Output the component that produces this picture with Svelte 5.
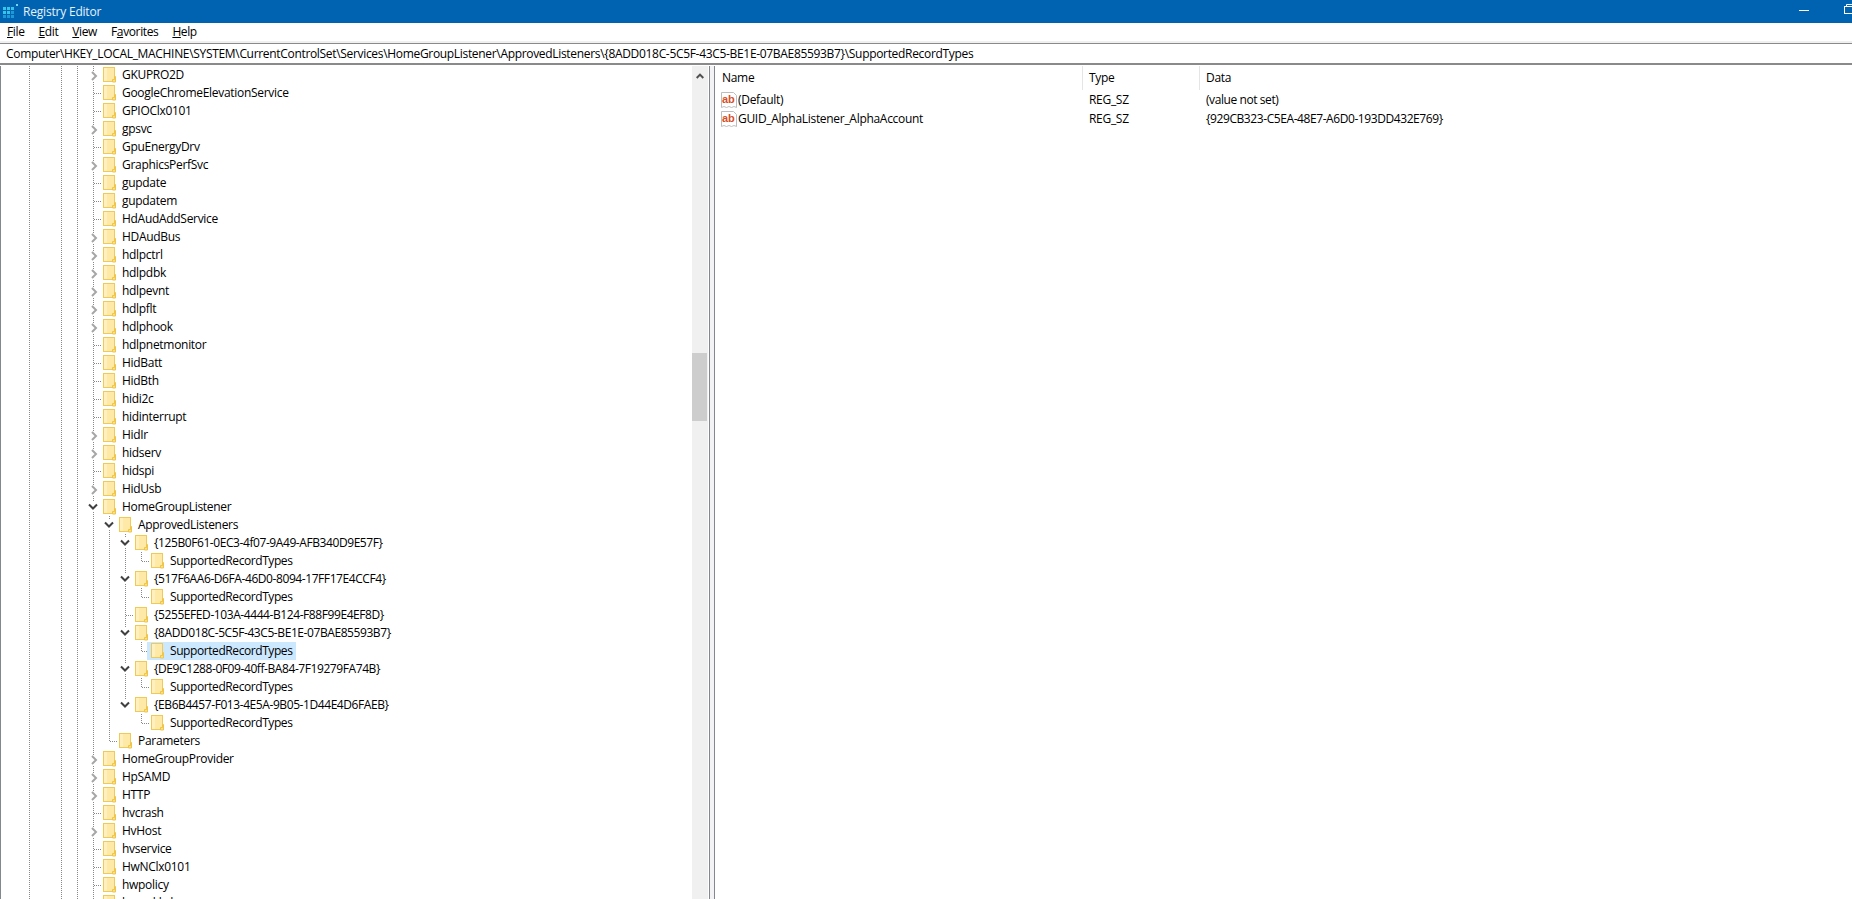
<script>
  const top = 'l-ll';
  const d1 = 'l-lll';
  const d2 = 'l-llll';
  const d3 = 'l-lllll';
  const d3last = 'l-llll-';

  // name, connector kind, indent guides
  const rows = [
    ['GKUPRO2D', 'closed', top],
    ['GoogleChromeElevationService', 'tee', top],
    ['GPIOClx0101', 'tee', top],
    ['gpsvc', 'closed', top],
    ['GpuEnergyDrv', 'tee', top],
    ['GraphicsPerfSvc', 'closed', top],
    ['gupdate', 'tee', top],
    ['gupdatem', 'tee', top],
    ['HdAudAddService', 'tee', top],
    ['HDAudBus', 'closed', top],
    ['hdlpctrl', 'closed', top],
    ['hdlpdbk', 'closed', top],
    ['hdlpevnt', 'closed', top],
    ['hdlpflt', 'closed', top],
    ['hdlphook', 'closed', top],
    ['hdlpnetmonitor', 'tee', top],
    ['HidBatt', 'tee', top],
    ['HidBth', 'tee', top],
    ['hidi2c', 'tee', top],
    ['hidinterrupt', 'tee', top],
    ['HidIr', 'closed', top],
    ['hidserv', 'closed', top],
    ['hidspi', 'tee', top],
    ['HidUsb', 'closed', top],
    ['HomeGroupListener', 'open', top],
    ['ApprovedListeners', 'open', d1],
    ['{125B0F61-0EC3-4f07-9A49-AFB340D9E57F}', 'open', d2],
    ['SupportedRecordTypes', 'corner', d3],
    ['{517F6AA6-D6FA-46D0-8094-17FF17E4CCF4}', 'open', d2],
    ['SupportedRecordTypes', 'corner', d3],
    ['{5255EFED-103A-4444-B124-F88F99E4EF8D}', 'tee', d2],
    ['{8ADD018C-5C5F-43C5-BE1E-07BAE85593B7}', 'open', d2],
    ['SupportedRecordTypes', 'corner', d3, true],
    ['{DE9C1288-0F09-40ff-BA84-7F19279FA74B}', 'open', d2],
    ['SupportedRecordTypes', 'corner', d3],
    ['{EB6B4457-F013-4E5A-9B05-1D44E4D6FAEB}', 'open last', d2],
    ['SupportedRecordTypes', 'corner', d3last],
    ['Parameters', 'corner', d1],
    ['HomeGroupProvider', 'closed', top],
    ['HpSAMD', 'closed', top],
    ['HTTP', 'closed', top],
    ['hvcrash', 'tee', top],
    ['HvHost', 'closed', top],
    ['hvservice', 'tee', top],
    ['HwNClx0101', 'tee', top],
    ['hwpolicy', 'tee', top],
    ['hyperkbd', 'tee', top],
  ];

  const values = [
    ['(Default)', 'REG_SZ', '(value not set)'],
    ['GUID_AlphaListener_AlphaAccount', 'REG_SZ', '{929CB323-C5EA-48E7-A6D0-193DD432E769}'],
  ];

  const path = 'Computer\\HKEY_LOCAL_MACHINE\\SYSTEM\\CurrentControlSet\\Services\\HomeGroupListener\\ApprovedListeners\\{8ADD018C-5C5F-43C5-BE1E-07BAE85593B7}\\SupportedRecordTypes';
</script>

<div class="window">
  <header class="titlebar">
    <svg class="app-icon" width="17" height="17" viewBox="0 0 17 17" aria-hidden="true">
      <g fill="#35c4ea">
        <rect x="1" y="4" width="3" height="3" />
        <rect x="5" y="4" width="3" height="3" />
        <rect x="9" y="4" width="3" height="3" />
        <rect x="1" y="8" width="3" height="3" />
        <rect x="5" y="8" width="3" height="3" />
      </g>
      <g fill="#1b9ad6">
        <rect x="9" y="8" width="3" height="3" />
        <rect x="1" y="12" width="3" height="3" />
        <rect x="5" y="12" width="3" height="3" />
        <rect x="9" y="12" width="3" height="3" />
      </g>
      <rect x="14" y="1" width="2" height="2" fill="#6fd8f2" />
    </svg>
    <span class="title">Registry Editor</span>
    <svg class="min" width="10" height="1" aria-hidden="true"><rect width="10" height="1" fill="#fff" /></svg>
    <svg class="restore" width="11" height="11" viewBox="0 0 11 11" aria-hidden="true">
      <path d="M2.5 2.5V.5h8v7h-2" fill="none" stroke="#fff" />
      <rect x=".5" y="2.5" width="8" height="7" fill="none" stroke="#fff" />
    </svg>
  </header>

  <nav class="menubar">
    <span><u>F</u>ile</span>
    <span><u>E</u>dit</span>
    <span><u>V</u>iew</span>
    <span>F<u>a</u>vorites</span>
    <span><u>H</u>elp</span>
  </nav>

  <div class="address">{path}</div>

  <main class="panes">
    <div class="tree">
      {#each rows as [name, kind, guides, selected]}
        <div class="row">
          {#each guides as g}
            <span class="cell" class:line={g === 'l'}></span>
          {/each}
          <span class="cell {kind}">
            {#if kind.startsWith('closed')}
              <svg width="10" height="10" viewBox="0 0 10 10" aria-hidden="true"><path d="M3 1l4 4-4 4" fill="none" stroke="#a6a6a6" stroke-width="2" /></svg>
            {:else if kind.startsWith('open')}
              <svg width="10" height="8" viewBox="0 0 10 8" aria-hidden="true"><path d="M1 1.5l4 4 4-4" fill="none" stroke="#404040" stroke-width="2" /></svg>
            {/if}
          </span>
          <span class="item" class:selected>
            <svg class="folder" width="14" height="16" viewBox="0 0 14 16" aria-hidden="true">
              <rect x=".5" y=".5" width="11" height="14" fill="#fee9a6" stroke="#f0ca55" />
              <rect x="1" y="1" width="3" height="13" fill="#fff0bf" />
              <path d="M11.5 9.500h1v5.500h-3v-2.500h2z" fill="#fde08a" stroke="#eec44a" />
            </svg>
            <span class="label" class:tight={guides.length > 5}>{name}</span>
          </span>
        </div>
      {/each}
    </div>

    <div class="scrollbar">
      <div class="arrow">
        <svg width="8" height="6" viewBox="0 0 8 6" aria-hidden="true"><path d="M.7 5L4 1.6 7.3 5" fill="none" stroke="#505050" stroke-width="2" /></svg>
      </div>
      <div class="thumb"></div>
    </div>

    <div class="splitter"></div>

    <div class="list">
      <div class="grid head">
        <span>Name</span>
        <span>Type</span>
        <span>Data</span>
      </div>
      {#each values as [name, type, data]}
        <div class="grid value">
          <span class="name">
            <svg width="16" height="16" viewBox="0 0 16 16" aria-hidden="true">
              <path d="M.5.5h12l3 3v12l-2.500-1-2.500 1-2.500-1-2.500 1-2.500-1-2.500 1z" fill="#fff" stroke="#bdbdbd" />
              <text x="1" y="11" class="ab">ab</text>
            </svg>
            {name}
          </span>
          <span>{type}</span>
          <span class="data">{data}</span>
        </div>
      {/each}
    </div>
  </main>
</div>

<style>
  :global(body) {
    margin: 0;
    background: #fff;
  }
  .window {
    height: 100vh;
    display: flex;
    flex-direction: column;
    overflow: hidden;
    font: 12px/18px "Open Sans", "Noto Sans", sans-serif;
    letter-spacing: -0.3px;
    color: #000;
  }
  .titlebar {
    height: 23px;
    flex-shrink: 0;
    display: flex;
    align-items: center;
    background: #0063b1;
    color: #e8f2fa;
    padding-left: 2px;
    letter-spacing: -0.2px;
  }
  .app-icon { flex-shrink: 0; }
  .title { margin-left: 4px; }
  .min { margin-left: auto; margin-bottom: 3px; flex-shrink: 0; }
  .restore { margin-left: 35px; margin-right: -3px; margin-bottom: 4px; flex-shrink: 0; }

  .menubar {
    height: 18px;
    flex-shrink: 0;
    display: flex;
    gap: 14px;
    padding-left: 7px;
    border-bottom: 2px solid #f0f0f0;
    letter-spacing: -0.38px;
  }
  .menubar u { text-underline-offset: 1px; }

  .address {
    height: 19px;
    flex-shrink: 0;
    padding-left: 6px;
    line-height: 20px;
    white-space: nowrap;
    letter-spacing: -0.32px;
    border-top: 1px solid #8a8a8a;
    border-bottom: 2px solid #8a8a8a;
  }

  .panes {
    flex: 1;
    min-height: 0;
    display: flex;
    padding-top: 1px;
  }
  .tree {
    width: 691px;
    flex-shrink: 0;
    border-left: 1px solid #828790;
    padding-left: 20px;
    box-sizing: content-box;
    margin-right: -20px;
    overflow: hidden;
  }
  .row {
    height: 18px;
    display: flex;
    white-space: nowrap;
  }
  .cell {
    width: 16px;
    height: 18px;
    flex-shrink: 0;
    display: flex;
    align-items: center;
    justify-content: center;
    --dots-v: repeating-linear-gradient(to bottom, #888 0 1px, transparent 1px 2px);
    --dots-h: repeating-linear-gradient(to right, #888 0 1px, transparent 1px 2px);
  }
  .line, .closed, .open {
    background: var(--dots-v) 8px 0 / 1px 18px no-repeat;
  }
  .open.last {
    background-size: 1px 4px;
  }
  .tee {
    background:
      var(--dots-h) 9px 9px / 7px 1px no-repeat,
      var(--dots-v) 8px 0 / 1px 18px no-repeat;
  }
  .corner {
    background:
      var(--dots-h) 9px 9px / 7px 1px no-repeat,
      var(--dots-v) 8px 0 / 1px 10px no-repeat;
  }
  .closed svg { background: #fff; margin-top: 2px; margin-left: 1px; }
  .open svg { background: #fff; margin-top: -1px; padding: 1px 0; }

  .item {
    display: flex;
    margin-left: -2px;
    padding: 0 4px;
  }
  .item.selected { background: #cce8ff; }
  .folder { flex-shrink: 0; margin-top: 1px; margin-right: 5px; }
  .tight { letter-spacing: -0.42px; }

  .scrollbar {
    width: 16px;
    flex-shrink: 0;
    background: #f0f0f0;
    margin-left: 0;
  }
  .arrow {
    height: 17px;
    display: flex;
    align-items: center;
    justify-content: center;
    padding-top: 3px;
    box-sizing: border-box;
  }
  .thumb {
    width: 15px;
    height: 68px;
    margin-top: 270px;
    background: #cdcdcd;
  }
  .splitter {
    width: 4px;
    flex-shrink: 0;
    margin-left: 1px;
    background: #f3f3f5;
    border-left: 1px solid #828790;
    border-right: 1px solid #828790;
  }

  .list { flex: 1; min-width: 0; }
  .grid {
    display: grid;
    grid-template-columns: 367px 117px 1fr;
  }
  .head {
    height: 24px;
    align-items: center;
    box-sizing: border-box;
  }
  .head span { padding-left: 7px; }
  .head span + span { border-left: 1px solid #e5e5e5; padding-left: 6px; height: 24px; line-height: 24px; }
  .value {
    height: 19px;
    align-items: center;
  }
  .value span { padding-left: 7px; }
  .value .name {
    display: flex;
    align-items: center;
    gap: 1px;
    padding-left: 6px;
  }
  .data { letter-spacing: -0.42px; }
  .ab {
    font: bold 11px "Liberation Sans", sans-serif;
    fill: #d8502a;
    letter-spacing: 0;
  }
</style>
